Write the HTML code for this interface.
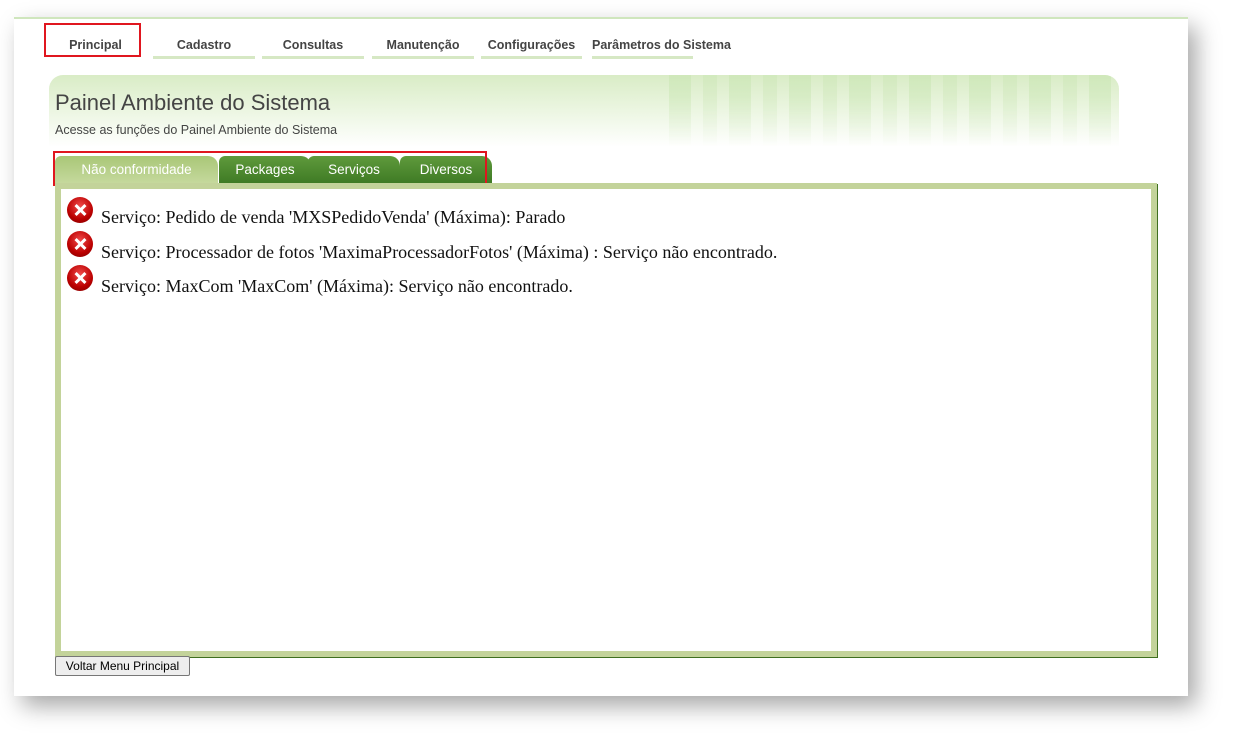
<!DOCTYPE html>
<html><head><meta charset="utf-8"><style>
body{margin:0;width:1236px;height:744px;background:#fff;position:relative;overflow:hidden;font-family:"Liberation Sans",sans-serif}
.page{position:absolute;left:14px;top:17px;width:1174px;height:677px;background:#fff;box-shadow:8px 10px 22px rgba(0,0,0,.35);border-top:2px solid #cfe6bd}
.nav a{position:absolute;top:19px;font-size:12.5px;font-weight:bold;color:#444;text-align:center;height:18px;border-bottom:3px solid #d6e8c4;white-space:nowrap}
.banner{position:absolute;left:35px;top:56px;width:1070px;height:72px;border-radius:14px 14px 0 0;background:linear-gradient(180deg,#d9ecc6 0%,#eaf5df 45%,#fff 100%)}
.banner .deco{position:absolute;right:0;top:0;width:450px;height:72px;border-radius:0 14px 0 0;background:repeating-linear-gradient(90deg,rgba(190,225,165,.35) 0 22px,rgba(255,255,255,0) 22px 34px,rgba(190,225,165,.25) 34px 48px,rgba(255,255,255,0) 48px 60px);-webkit-mask:linear-gradient(180deg,#000 30%,transparent);mask:linear-gradient(180deg,#000 30%,transparent)}
h1{position:absolute;left:41px;top:71px;margin:0;font-size:22px;font-weight:normal;color:#444}
.sub{position:absolute;left:41px;top:104px;font-size:12.5px;color:#444}
.tab{position:absolute;top:137px;height:28px;line-height:28px;color:#fff;font-size:13.5px;text-align:center;border-radius:6px 10px 0 0;background:linear-gradient(#5f9a3c,#3e7a24)}
.tab.act{background:linear-gradient(#a9c777,#c6d99e);}
.box{position:absolute;left:41px;top:164px;width:1090px;height:462px;border:6px solid #c3d39a;box-shadow:1px 1px 0 #3f6f1f;background:#fff}
.red{position:absolute;border:2px solid #e0161f}
.row{position:absolute;left:53px;font-family:"Liberation Serif",serif;font-size:18px;color:#111}
.ic{position:absolute;left:0;width:26px;height:26px;border-radius:50%;background:radial-gradient(circle at 50% 35%,#f04a4a,#b00 60%,#700);}
.ic:before,.ic:after{content:"";position:absolute;left:12px;top:6px;width:3px;height:14px;background:#fff;transform:rotate(45deg)}
.ic:after{transform:rotate(-45deg)}
.row span{position:absolute;left:34px;white-space:nowrap}
.btn{position:absolute;left:41px;top:637px;width:133px;height:18px;border:1px solid #777;background:#eee;font-size:12px;line-height:18px;text-align:center;border-radius:2px}
</style></head><body>
<div class="page">
<div class="nav">
<a style="left:40px;width:83px;border-color:transparent">Principal</a>
<a style="left:139px;width:102px">Cadastro</a>
<a style="left:248px;width:102px">Consultas</a>
<a style="left:358px;width:102px">Manutenção</a>
<a style="left:467px;width:101px">Configurações</a>
<a style="left:578px;width:101px">Parâmetros do Sistema</a>
</div>
<div class="red" style="left:30px;top:4px;width:93px;height:30px"></div>
<div class="banner"><div class="deco"></div></div>
<h1>Painel Ambiente do Sistema</h1>
<div class="sub">Acesse as funções do Painel Ambiente do Sistema</div>
<div class="tab act" style="left:41px;width:163px">Não conformidade</div>
<div class="tab" style="left:205px;width:92px">Packages</div>
<div class="tab" style="left:294px;width:92px">Serviços</div>
<div class="tab" style="left:386px;width:92px">Diversos</div>
<div class="red" style="left:39px;top:132px;width:430px;height:31px"></div>
<div class="box"></div>
<div class="row" style="top:178px"><div class="ic"></div><span style="top:10px">Serviço: Pedido de venda 'MXSPedidoVenda' (Máxima): Parado</span></div>
<div class="row" style="top:212px"><div class="ic"></div><span style="top:11px">Serviço: Processador de fotos 'MaximaProcessadorFotos' (Máxima) : Serviço não encontrado.</span></div>
<div class="row" style="top:246px"><div class="ic"></div><span style="top:11px">Serviço: MaxCom 'MaxCom' (Máxima): Serviço não encontrado.</span></div>
<div class="btn">Voltar Menu Principal</div>
</div>
</body></html>
